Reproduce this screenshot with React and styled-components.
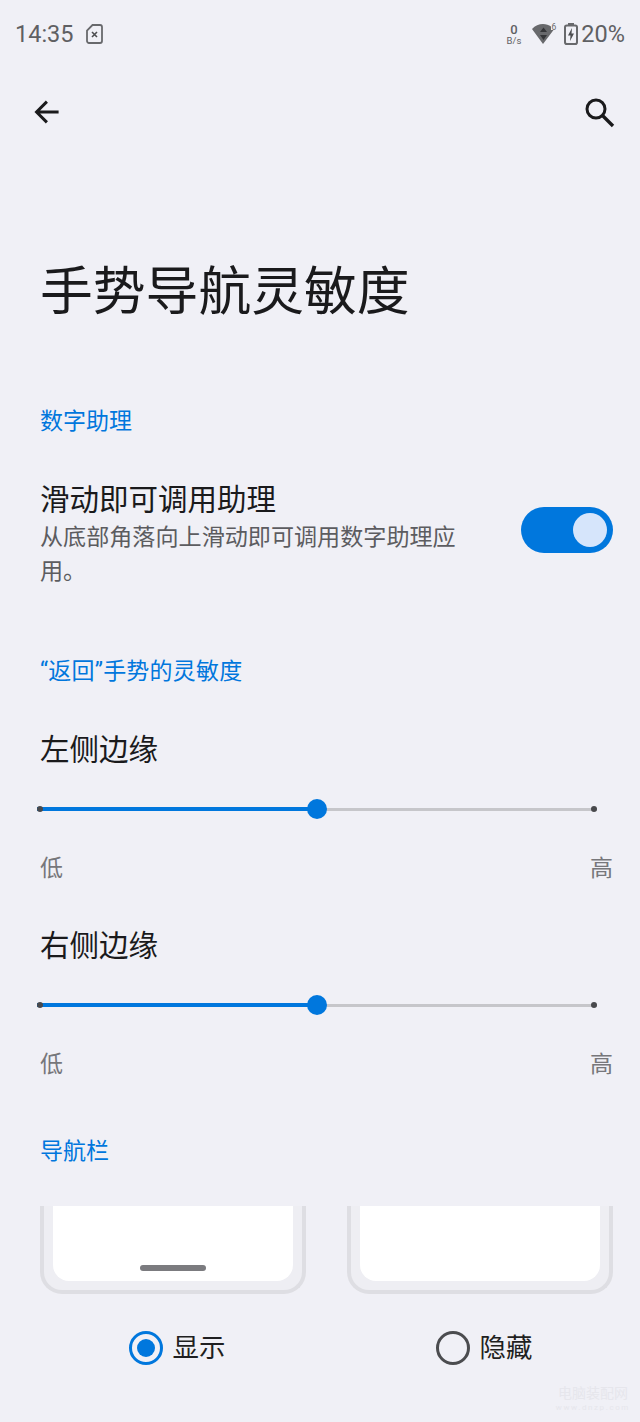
import React from "react";
import styled, { createGlobalStyle } from "styled-components";

const BLUE = "#0077dd";
const CJK = `Roboto, "Noto Sans CJK SC", sans-serif`;

const Global = createGlobalStyle`
  html, body { margin: 0; padding: 0; background: #f0f0f6; }
  body { font-family: ${CJK}; }
`;

const Page = styled.div`
  width: 640px;
  height: 1422px;
  overflow: hidden;
  position: relative;
  background: #f0f0f6;
  box-sizing: border-box;
`;

const StatusBar = styled.div`
  height: 68px;
  padding: 0 15px 0 15px;
  display: flex;
  align-items: center;
  justify-content: space-between;
  color: #5f6063;
`;
const StatusGroup = styled.div`
  display: flex;
  align-items: center;
`;
const Clock = styled.span`
  font-size: 23.5px;
  font-weight: 400;
  margin-right: 12px;
`;
const Speed = styled.div`
  display: flex;
  flex-direction: column;
  align-items: center;
  font-size: 9.5px;
  line-height: 10px;
  font-weight: 400;
  margin-right: 11px;
  b {
    font-size: 13px;
    line-height: 13px;
    font-weight: 500;
  }
`;
const Percent = styled.span`
  font-size: 23.5px;
  font-weight: 400;
  margin-left: 3px;
`;

const Toolbar = styled.div`
  height: 88px;
  padding: 0 25px 0 31px;
  display: flex;
  align-items: center;
  justify-content: space-between;
`;

const Title = styled.h1`
  margin: 0;
  padding: 100px 0 0 40px;
  font-size: 52.8px;
  line-height: 72px;
  font-weight: 400;
  color: #1a1a1c;
  white-space: nowrap;
`;

const SectionTitle = styled.div`
  padding-left: 40px;
  margin-top: ${(p) => p.$top}px;
  font-size: 23px;
  line-height: 32px;
  letter-spacing: ${(p) => p.$spacing || 0}px;
  color: ${BLUE};
  white-space: nowrap;
`;

const SwitchRow = styled.div`
  margin-top: 42px;
  padding: 0 27px 0 40px;
  display: flex;
  align-items: center;
  justify-content: space-between;
`;
const SwitchText = styled.div`
  width: 420px;
`;
const RowTitle = styled.div`
  font-size: 29.5px;
  line-height: 41px;
  color: #1a1a1c;
  white-space: nowrap;
`;
const RowDesc = styled.div`
  font-size: 23.1px;
  line-height: 34px;
  color: #5c5c60;
`;
const Switch = styled.div`
  width: 92px;
  height: 46px;
  border-radius: 23px;
  background: ${BLUE};
  display: flex;
  align-items: center;
  justify-content: flex-end;
  padding-right: 6px;
  box-sizing: border-box;
  margin-top: -10px;
`;
const Knob = styled.div`
  width: 34px;
  height: 34px;
  border-radius: 50%;
  background: #d6e5fb;
`;

const SliderBlock = styled.div`
  margin-top: ${(p) => p.$top}px;
  padding: 0 27px 0 40px;
`;
const SliderTrack = styled.div`
  position: relative;
  height: 22px;
  margin: 27px 0 0 -3px;
  width: 560px;
  display: flex;
  align-items: center;
`;
const Line = styled.div`
  height: ${(p) => p.$h}px;
  background: ${(p) => p.$color};
  flex: ${(p) => p.$flex};
`;
const EndDot = styled.span`
  position: absolute;
  top: 8px;
  width: 6px;
  height: 6px;
  border-radius: 50%;
  background: #48494c;
  ${(p) => (p.$right ? "right: 0;" : "left: 0;")}
`;
const Thumb = styled.span`
  position: absolute;
  top: 1px;
  left: 270px;
  width: 20px;
  height: 20px;
  border-radius: 50%;
  background: ${BLUE};
`;
const Ends = styled.div`
  margin-top: 33px;
  display: flex;
  justify-content: space-between;
  font-size: 23px;
  line-height: 32px;
  color: #77777b;
`;

const Cards = styled.div`
  margin-top: 38px;
  padding: 0 27px 0 40px;
  display: grid;
  grid-template-columns: 266px 266px;
  column-gap: 41px;
`;
const Phone = styled.div`
  height: 88px;
  box-sizing: border-box;
  background: #eeeef3;
  border: 4px solid #dedee3;
  border-top: 0;
  border-radius: 0 0 22px 22px;
  padding: 0 9px 9px;
  display: flex;
`;
const Screen = styled.div`
  flex: 1;
  background: #fff;
  border-radius: 0 0 16px 16px;
  display: flex;
  align-items: flex-end;
  justify-content: center;
  padding-bottom: 10px;
`;
const HomeBar = styled.div`
  width: 66px;
  height: 6px;
  border-radius: 3px;
  background: #7b7b7f;
`;
const RadioCell = styled.div`
  margin-top: 37px;
  padding-left: 8px;
  display: flex;
  align-items: center;
  justify-content: center;
  gap: 10px;
  font-size: 26.4px;
  line-height: 34px;
  color: #1f1f21;
`;
const Radio = styled.span`
  width: 34px;
  height: 34px;
  box-sizing: border-box;
  border-radius: 50%;
  border: 3.5px solid ${(p) => (p.$on ? BLUE : "#4b4c4f")};
  display: flex;
  align-items: center;
  justify-content: center;
  &::after {
    content: "";
    width: 18px;
    height: 18px;
    border-radius: 50%;
    background: ${(p) => (p.$on ? BLUE : "transparent")};
  }
`;

const Watermark = styled.div`
  position: absolute;
  right: 10px;
  bottom: 8px;
  color: #e6e6ec;
  text-align: center;
  font-size: 14px;
  line-height: 18px;
  small {
    display: block;
    font-size: 8px;
    line-height: 12px;
    letter-spacing: 1.6px;
  }
`;

const WifiWrap = styled.div`
  display: flex;
  margin-right: 6px;
`;

const SimIcon = () => (
  <svg width="17" height="20" viewBox="0 0 17 20" fill="none" stroke="#68696c" strokeWidth="1.8">
    <path d="M6.500 1H14a2 2 0 0 1 2 2v14a2 2 0 0 1-2 2H3a2 2 0 0 1-2-2V6.500z" />
    <path d="M6 8l5 5M11 8l-5 5" strokeWidth="1.6" stroke="#4c4d50" />
  </svg>
);

const WifiIcon = () => (
  <svg width="26" height="22" viewBox="0 0 26 22">
    <path d="M0 6C3 2.500 7 1 11 1c3 0 6 1 8 2.500V7h2.500L11 21z" fill="#68696c" />
    <path d="M11.500 4.500l3.500 4.500H8zM11.500 17L8 12h7z" fill="#343538" />
    <text x="19.500" y="7" fontSize="8.500" fontFamily="Roboto, sans-serif" fill="#68696c">6</text>
  </svg>
);

const BatteryIcon = () => (
  <svg width="14" height="22" viewBox="0 0 14 22" fill="none">
    <path d="M4 0h6v2.500H4z" fill="#68696c" />
    <rect x="1" y="2.500" width="12" height="18.500" rx="1.800" stroke="#68696c" strokeWidth="2" />
    <path d="M8 5l-4 7.500h2.500L6 18l4-7.500H7.500z" fill="#4c4d50" />
  </svg>
);

const BackIcon = () => (
  <svg width="30" height="30" viewBox="0 0 30 30" fill="none" stroke="#1a1a1c" strokeWidth="3.300">
    <path d="M29 15H5M16 3.500L4.500 15 16 26.500" transform="translate(1.500 1.500) scale(0.9)" />
  </svg>
);

const SearchIcon = () => (
  <svg width="32" height="32" viewBox="0 0 32 32" fill="none" stroke="#1a1a1c" strokeWidth="3">
    <circle cx="13" cy="13" r="9" />
    <path d="M19.500 19.500L30 30" strokeWidth="3.400" />
  </svg>
);

const Slider = () => (
  <SliderTrack>
    <EndDot />
    <Line $h={4} $color={BLUE} $flex="280" />
    <Line $h={3} $color="#c6c6ca" $flex="280" />
    <EndDot $right />
    <Thumb />
  </SliderTrack>
);

export default function App() {
  return (
    <Page>
      <Global />
      <StatusBar>
        <StatusGroup>
          <Clock>14:35</Clock>
          <SimIcon />
        </StatusGroup>
        <StatusGroup>
          <Speed>
            <b>0</b>
            B/s
          </Speed>
          <WifiWrap>
            <WifiIcon />
          </WifiWrap>
          <BatteryIcon />
          <Percent>20%</Percent>
        </StatusGroup>
      </StatusBar>
      <Toolbar>
        <BackIcon />
        <SearchIcon />
      </Toolbar>
      <Title>手势导航灵敏度</Title>
      <SectionTitle $top={78}>数字助理</SectionTitle>
      <SwitchRow>
        <SwitchText>
          <RowTitle>滑动即可调用助理</RowTitle>
          <RowDesc>从底部角落向上滑动即可调用数字助理应用。</RowDesc>
        </SwitchText>
        <Switch>
          <Knob />
        </Switch>
      </SwitchRow>
      <SectionTitle $top={67} $spacing={0.2}>“返回”手势的灵敏度</SectionTitle>
      <SliderBlock $top={42}>
        <RowTitle>左侧边缘</RowTitle>
        <Slider />
        <Ends>
          <span>低</span>
          <span>高</span>
        </Ends>
      </SliderBlock>
      <SliderBlock $top={41}>
        <RowTitle>右侧边缘</RowTitle>
        <Slider />
        <Ends>
          <span>低</span>
          <span>高</span>
        </Ends>
      </SliderBlock>
      <SectionTitle $top={55}>导航栏</SectionTitle>
      <Cards>
        <div>
          <Phone>
            <Screen>
              <HomeBar />
            </Screen>
          </Phone>
          <RadioCell>
            <Radio $on />
            显示
          </RadioCell>
        </div>
        <div>
          <Phone>
            <Screen />
          </Phone>
          <RadioCell>
            <Radio />
            隐藏
          </RadioCell>
        </div>
      </Cards>
      <Watermark>
        电脑装配网
        <small>www.dnzp.com</small>
      </Watermark>
    </Page>
  );
}
